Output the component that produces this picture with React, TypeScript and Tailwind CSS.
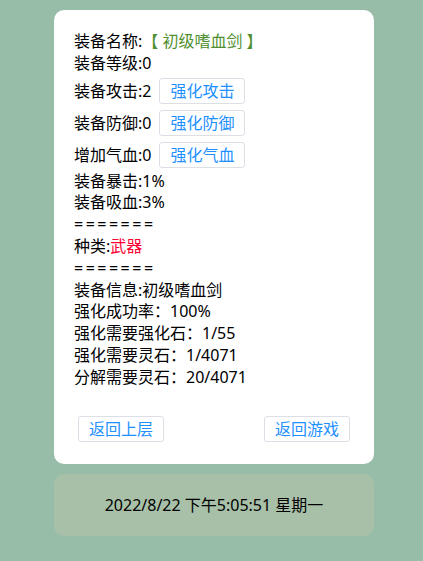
import React from "react";

const Btn = ({ children }: { children: React.ReactNode }) => (
  <span className="inline-flex items-center justify-center w-[86px] h-[26px] border border-[#dcdfe6] rounded-[3px] text-[#1e90ff] text-[16px] leading-none bg-white">
    {children}
  </span>
);

const Line = ({ children }: { children: React.ReactNode }) => (
  <div className="h-[21.8px] leading-[21.8px] whitespace-nowrap">{children}</div>
);

export default function App() {
  return (
    <div
      className="w-[423px] h-[561px] bg-[#97bca8] pl-[54px] pt-[10px] text-[16px] text-black"
      style={{ fontFamily: '"Noto Sans", "Noto Sans CJK SC", sans-serif' }}
    >
      <div className="w-[320px] bg-white rounded-[10px] pt-[21px] pb-[22px] px-[20px]">
        <Line>
          装备名称:<span className="text-[#4f8f2f]">【 初级嗜血剑 】</span>
        </Line>
        <Line>装备等级:0</Line>
        <div className="h-[32px] flex items-center gap-[8px]">
          <span>装备攻击:2</span>
          <Btn>强化攻击</Btn>
        </div>
        <div className="h-[32px] flex items-center gap-[8px]">
          <span>装备防御:0</span>
          <Btn>强化防御</Btn>
        </div>
        <div className="h-[32px] flex items-center gap-[8px]">
          <span>增加气血:0</span>
          <Btn>强化气血</Btn>
        </div>
        <Line>装备暴击:1%</Line>
        <Line>装备吸血:3%</Line>
        <Line>
          <span className="tracking-[2.5px]">=======</span>
        </Line>
        <Line>
          种类:<span className="text-[#ff0033]">武器</span>
        </Line>
        <Line>
          <span className="tracking-[2.5px]">=======</span>
        </Line>
        <Line>装备信息:初级嗜血剑</Line>
        <Line>强化成功率：100%</Line>
        <Line>强化需要强化石：1/55</Line>
        <Line>强化需要灵石：1/4071</Line>
        <Line>分解需要灵石：20/4071</Line>
        <div className="flex justify-between px-[4px] mt-[27px]">
          <Btn>返回上层</Btn>
          <Btn>返回游戏</Btn>
        </div>
      </div>
      <div className="w-[320px] h-[62px] mt-[10px] bg-[#a8c0a8] rounded-[10px] flex items-center justify-center">
        2022/8/22 下午5:05:51 星期一
      </div>
    </div>
  );
}
